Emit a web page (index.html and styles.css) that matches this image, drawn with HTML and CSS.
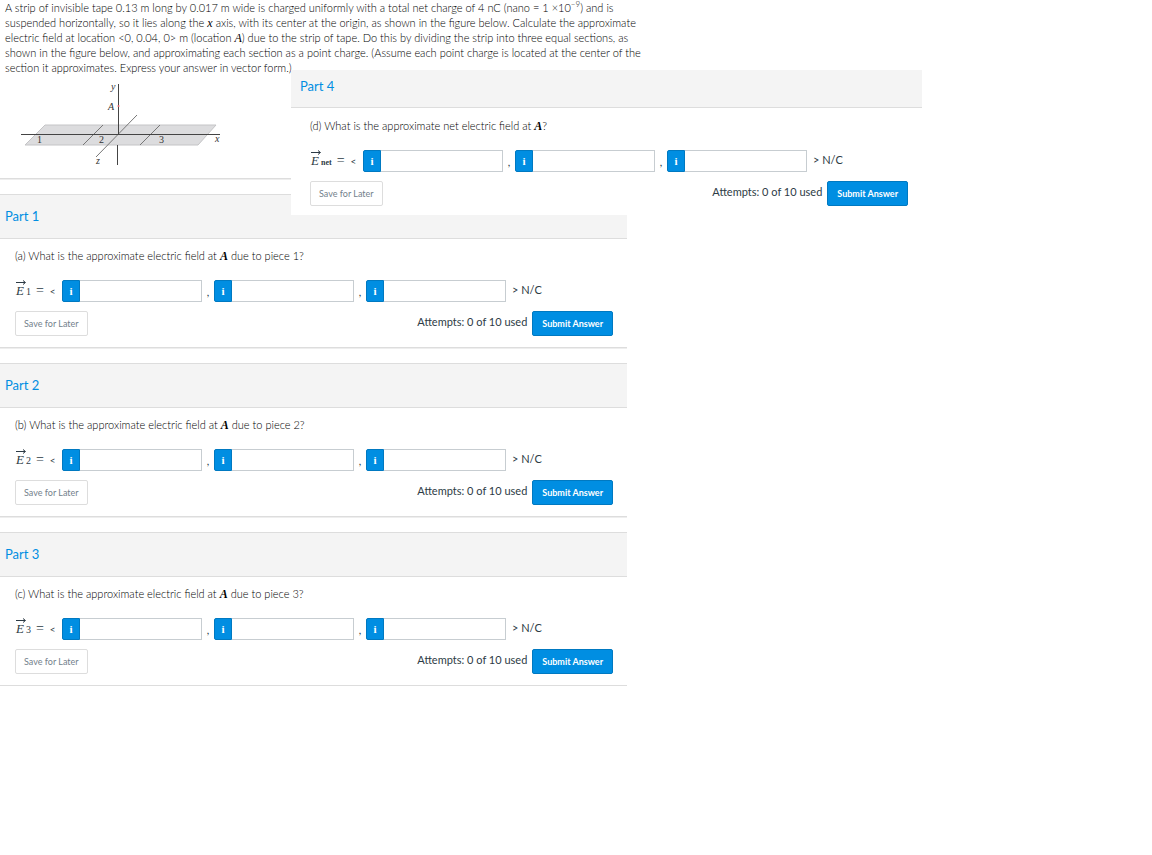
FILE: index.html
```
<!DOCTYPE html>
<html lang="en">
<head>
    <meta charset="UTF-8">
    <meta name="viewport" content="width=device-width, initial-scale=1.0">
    <title>Electric Field of a Strip of Tape</title>
    <link rel="stylesheet" href="styles.css">
</head>
<body>
    <main class="problem">
        <div class="intro">
            <p>A strip of invisible tape 0.13 m long by 0.017 m wide is charged uniformly with a total net charge of 4 nC (nano = 1 ×10<sup>−9</sup>) and is<br>
            suspended horizontally, so it lies along the <i>x</i> axis, with its center at the origin, as shown in the figure below. Calculate the approximate<br>
            electric field at location &lt;0, 0.04, 0&gt; m (location <i>A</i>) due to the strip of tape. Do this by dividing the strip into three equal sections, as<br>
            shown in the figure below, and approximating each section as a point charge. (Assume each point charge is located at the center of the<br>
            section it approximates. Express your answer in vector form.)</p>
            <svg class="figure" width="240" height="95" viewBox="0 75 240 95">
                <polygon points="45,125 216,125 198,145 25,145" fill="#dcdcde" stroke="#c4c4c6"/>
                <path d="M103 125L83 145M160 125L140 145M137 115L96 157" fill="none" stroke="#777"/>
                <path d="M21 134.500H220M118.500 84V134M117.500 145V165" fill="none" stroke="#444"/>
                <circle cx="118.500" cy="106" r="1" fill="#e0616b"/>
                <g class="figure-text">
                    <text x="37" y="143">1</text>
                    <text x="99" y="143">2</text>
                    <text x="159" y="143">3</text>
                    <text class="axis" x="111" y="90">y</text>
                    <text class="axis" x="108" y="110">A</text>
                    <text class="axis" x="215" y="142">x</text>
                    <text class="axis" x="96" y="164">z</text>
                </g>
            </svg>
        </div>

        <section class="part">
            <h2>Part 1</h2>
            <form class="part-body">
                <p class="question">(a) What is the approximate electric field at <i>A</i> due to piece 1?</p>
                <div class="answer">
                    <span class="vector"><i class="vec">E<svg width="10" height="5" viewBox="0 0 10 5"><path d="M0 2.500H9M7 0.500L9.500 2.500L7 4.500"/></svg></i><sub>1</sub><span class="eq">=</span><span class="lt">&lt;</span></span>
                    <span class="field"><button type="button">i</button><input type="text" aria-label="E1 x component"></span>
                    <span class="comma">,</span>
                    <span class="field"><button type="button">i</button><input type="text" aria-label="E1 y component"></span>
                    <span class="comma">,</span>
                    <span class="field"><button type="button">i</button><input type="text" aria-label="E1 z component"></span>
                    <span class="unit">&gt; N/C</span>
                </div>
                <div class="actions">
                    <button type="button" class="save">Save for Later</button>
                    <span class="attempts">Attempts: 0 of 10 used</span>
                    <button type="button" class="submit">Submit Answer</button>
                </div>
            </form>
        </section>

        <section class="part">
            <h2>Part 2</h2>
            <form class="part-body">
                <p class="question">(b) What is the approximate electric field at <i>A</i> due to piece 2?</p>
                <div class="answer">
                    <span class="vector"><i class="vec">E<svg width="10" height="5" viewBox="0 0 10 5"><path d="M0 2.500H9M7 0.500L9.500 2.500L7 4.500"/></svg></i><sub>2</sub><span class="eq">=</span><span class="lt">&lt;</span></span>
                    <span class="field"><button type="button">i</button><input type="text" aria-label="E2 x component"></span>
                    <span class="comma">,</span>
                    <span class="field"><button type="button">i</button><input type="text" aria-label="E2 y component"></span>
                    <span class="comma">,</span>
                    <span class="field"><button type="button">i</button><input type="text" aria-label="E2 z component"></span>
                    <span class="unit">&gt; N/C</span>
                </div>
                <div class="actions">
                    <button type="button" class="save">Save for Later</button>
                    <span class="attempts">Attempts: 0 of 10 used</span>
                    <button type="button" class="submit">Submit Answer</button>
                </div>
            </form>
        </section>

        <section class="part">
            <h2>Part 3</h2>
            <form class="part-body">
                <p class="question">(c) What is the approximate electric field at <i>A</i> due to piece 3?</p>
                <div class="answer">
                    <span class="vector"><i class="vec">E<svg width="10" height="5" viewBox="0 0 10 5"><path d="M0 2.500H9M7 0.500L9.500 2.500L7 4.500"/></svg></i><sub>3</sub><span class="eq">=</span><span class="lt">&lt;</span></span>
                    <span class="field"><button type="button">i</button><input type="text" aria-label="E3 x component"></span>
                    <span class="comma">,</span>
                    <span class="field"><button type="button">i</button><input type="text" aria-label="E3 y component"></span>
                    <span class="comma">,</span>
                    <span class="field"><button type="button">i</button><input type="text" aria-label="E3 z component"></span>
                    <span class="unit">&gt; N/C</span>
                </div>
                <div class="actions">
                    <button type="button" class="save">Save for Later</button>
                    <span class="attempts">Attempts: 0 of 10 used</span>
                    <button type="button" class="submit">Submit Answer</button>
                </div>
            </form>
        </section>
    </main>

    <section class="part part-overlay">
        <h2>Part 4</h2>
        <form class="part-body">
            <p class="question">(d) What is the approximate net electric field at <i>A</i>?</p>
            <div class="answer">
                <span class="vector"><i class="vec">E<svg width="10" height="5" viewBox="0 0 10 5"><path d="M0 2.500H9M7 0.500L9.500 2.500L7 4.500"/></svg></i><sub class="word">net</sub><span class="eq">=</span><span class="lt">&lt;</span></span>
                <span class="field"><button type="button">i</button><input type="text" aria-label="Net E x component"></span>
                <span class="comma">,</span>
                <span class="field"><button type="button">i</button><input type="text" aria-label="Net E y component"></span>
                <span class="comma">,</span>
                <span class="field"><button type="button">i</button><input type="text" aria-label="Net E z component"></span>
                <span class="unit">&gt; N/C</span>
            </div>
            <div class="actions">
                <button type="button" class="save">Save for Later</button>
                <span class="attempts">Attempts: 0 of 10 used</span>
                <button type="button" class="submit">Submit Answer</button>
            </div>
        </form>
    </section>
</body>
</html>
```
FILE: styles.css
```
* {
    box-sizing: border-box;
}
body {
    margin: 0;
    background: #fff;
    color: #2d3b45;
    font-family: Lato, sans-serif;
    font-size: 11px;
    line-height: 15px;
}
p, h2 {
    margin: 0;
}
i {
    font-family: "Liberation Serif", serif;
    font-size: 12px;
    font-weight: 400;
    line-height: 1;
}
.problem {
    max-width: 627px;
}
.intro {
    padding-bottom: 8px;
    border-bottom: 1px solid #ddd;
    box-shadow: 0 1px #eee;
}
.intro p {
    padding-left: 5px;
    white-space: nowrap;
}
.intro p, .question {
    color: #000;
    font-weight: 300;
}
.intro sup {
    font-size: 8px;
    line-height: 1;
}
.figure {
    display: block;
}
.figure-text {
    font-family: "Liberation Serif", serif;
    font-size: 10px;
    fill: #333;
}
.figure-text .axis {
    font-style: italic;
}
.part {
    margin-top: 15px;
    background: #fff;
    border-top: 1px solid #ddd;
    border-bottom: 1px solid #ddd;
    box-shadow: 0 1px #eee;
}
.part h2 {
    padding: 14px 5px;
    background: #f4f4f4;
    border-bottom: 1px solid #ddd;
    color: #008ee2;
    font-size: 13px;
    font-weight: 400;
    line-height: 15px;
}
.part-body {
    padding: 9px 14px 11px 15px;
}
.question i {
    font-weight: 700;
}
.answer {
    display: flex;
    align-items: center;
    height: 22px;
    margin: 17px 0 9px;
}
.vector {
    display: flex;
    align-items: baseline;
    width: 47px;
    padding-left: 1px;
    font-family: "Liberation Serif", serif;
}
.vec {
    position: relative;
    font-size: 13px;
}
.vec svg {
    position: absolute;
    top: -4px;
    left: 0;
    fill: none;
    stroke: #2d3b45;
}
.vector sub {
    margin-left: 2px;
    font-size: 10px;
    line-height: 1;
}
.vector .word {
    font-size: 8px;
    font-weight: 700;
}
.eq {
    margin-left: 5px;
    font-size: 14px;
}
.lt {
    margin-left: 6px;
    font-family: Lato, sans-serif;
    font-size: 10px;
}
.field {
    display: flex;
    width: 140px;
    height: 22px;
}
.field button {
    width: 18px;
    padding: 0;
    background: #008ee2;
    border: 1px solid #0079c1;
    border-radius: 2px 0 0 2px;
    color: #fff;
    font: 700 11px "Liberation Serif", serif;
}
.field input {
    flex: 1;
    min-width: 0;
    border: 1px solid #c7cdd1;
    border-left: 0;
    font: inherit;
}
.comma {
    width: 12px;
    text-align: center;
}
.unit {
    margin-left: 6px;
    padding-bottom: 3px;
}
.actions {
    display: flex;
    align-items: center;
}
.save, .submit {
    height: 25px;
    padding: 0 9px;
    border-radius: 2px;
    font-family: inherit;
    font-size: 9px;
}
.save {
    padding: 0 8px;
    background: #fff;
    border: 1px solid #ddd;
    color: #73818c;
}
.submit {
    background: #008ee2;
    border: 1px solid #0079c1;
    color: #fff;
    font-weight: 700;
}
.attempts {
    margin: 0 5px 0 auto;
    padding-bottom: 4px;
}
/* Part 4 floats over the rest of the problem */
.part-overlay {
    position: absolute;
    top: 70px;
    left: 291px;
    width: 631px;
    margin: 0;
    border: 0;
    box-shadow: none;
}
.part-overlay h2 {
    padding: 9px 9px 13px;
}
.part-overlay .part-body {
    padding: 10px 14px 9px 19px;
}
.part-overlay .vector {
    width: 53px;
}
```
